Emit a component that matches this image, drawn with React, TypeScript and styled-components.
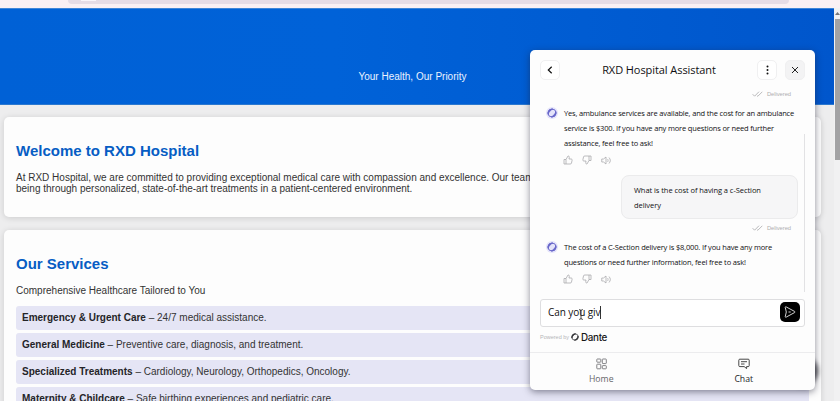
import React from "react";
import styled, { createGlobalStyle } from "styled-components";

const GlobalStyle = createGlobalStyle`
  * { box-sizing: border-box; }
  body {
    margin: 0;
    overflow: hidden;
    font-family: "Liberation Sans", Arial, sans-serif;
    font-size: 10px;
    color: #333;
    background: #ededee;
  }
  h1, h2, p, ul { margin: 0; padding: 0; }
  button { font: inherit; padding: 0; border: 0; background: none; }
`;

const Window = styled.div`
  position: relative;
  width: 840px;
  height: 401px;
  overflow: hidden;
  display: flex;
  flex-direction: column;
`;

const BrowserBar = styled.div`
  flex: none;
  height: 8px;
  padding: 0 51px 0 68px;
  background: #faf0f4;
`;

const AddressField = styled.div`
  height: 4px;
  border-radius: 0 0 8px 8px;
  padding-left: 13px;
  background: #e6dce6;
`;

const SiteChip = styled.div`
  width: 15px;
  height: 1px;
  background: #faf5fa;
`;

const Viewport = styled.div`
  flex: 1;
  min-height: 0;
  display: flex;
`;

const Page = styled.main`
  flex: none;
  width: 834px;
  overflow: hidden;
`;

const Banner = styled.header`
  height: 97px;
  padding-top: 62px;
  text-align: center;
  line-height: 11px;
  color: #eaf2ff;
  background: linear-gradient(90deg, #0061d6, #0062d8 40%, #0056cc);
  border-top: 1px solid #3f85d8;
  border-bottom: 1px solid #2b78cf;
  padding-right: 9px;
`;

const Card = styled.section<{ $height: number }>`
  width: 817px;
  height: ${(p) => p.$height}px;
  margin: 12px 0 13px 4px;
  padding: 25px 12px 0;
  border-radius: 5px;
  background: #fdfdfd;
  box-shadow: 0 1px 6px rgba(0, 0, 0, 0.14);
  & + & { margin-top: 13px; }
`;

const CardTitle = styled.h2`
  font-size: 15px;
  line-height: 17px;
  font-weight: 700;
  color: #075dc4;
`;

const CardText = styled.p`
  margin-top: 13px;
  line-height: 11px;
  white-space: nowrap;
`;

const ServiceList = styled.ul`
  margin-top: 10px;
  display: flex;
  flex-direction: column;
  gap: 3px;
  list-style: none;
`;

const Service = styled.li`
  height: 24px;
  padding: 0 6px;
  line-height: 24px;
  border-radius: 3px;
  background: #e5e5f5;
  strong { color: #242428; }
`;

const ScrollTrack = styled.div`
  width: 6px;
  padding-left: 1px;
  background: #f1f1f2;
`;

const ScrollArrow = styled.div`
  height: 11px;
  display: flex;
  align-items: center;
  justify-content: center;
`;

const ScrollThumb = styled.div`
  height: 141px;
  background: #a2a2a4;
`;

const ChatPanel = styled.aside`
  position: absolute;
  left: 530px;
  top: 50px;
  width: 285px;
  height: 340px;
  display: flex;
  flex-direction: column;
  border-radius: 5px;
  background: #fdfdfd;
  box-shadow: 0 2px 7px rgba(30, 30, 50, 0.5);
  font-family: "Open Sans", "Noto Sans", sans-serif;
  color: #101012;
`;

const Launcher = styled.div`
  position: absolute;
  left: 786px;
  top: 355px;
  width: 32px;
  height: 32px;
  border-radius: 50%;
  background: #505055;
  filter: blur(2px);
`;

const ChatHeader = styled.div`
  flex: none;
  height: 40px;
  padding: 0 10px;
  display: flex;
  align-items: center;
  gap: 8px;
`;

const ChatTitle = styled.h1`
  flex: 1;
  padding: 0 0 2px 1px;
  text-align: center;
  font-size: 11px;
  font-weight: 400;
  letter-spacing: -0.07px;
`;

const IconButton = styled.button<{ $filled?: boolean }>`
  width: 20px;
  height: 20px;
  display: flex;
  align-items: center;
  justify-content: center;
  border-radius: 5px;
  border: 1px solid #f0f0f1;
  background: ${(p) => (p.$filled ? "#f3f3f4" : "#fff")};
`;

const Messages = styled.div`
  flex: 1;
  min-height: 0;
  display: flex;
  justify-content: space-between;
  padding: 0 10px 0 16px;
`;

const Thread = styled.div`
  width: 252px;
  display: flex;
  flex-direction: column;
`;

const ThreadScroll = styled.div`
  width: 1px;
  height: 158px;
  margin-top: 44px;
  background: #e2e2e4;
`;

const Delivered = styled.div`
  height: 8px;
  margin-right: 7px;
  display: flex;
  align-items: center;
  justify-content: flex-end;
  gap: 4px;
  font-family: "Liberation Sans", Arial, sans-serif;
  font-size: 5.8px;
  letter-spacing: -0.05px;
  color: #aeaeb0;
`;

const BotMessage = styled.div`
  display: flex;
  gap: 6px;
  margin-top: 8px;
`;

const Avatar = styled.div`
  width: 12px;
  height: 12px;
  margin-top: 1px;
  flex: none;
  display: flex;
  align-items: center;
  justify-content: center;
  border-radius: 50%;
  background: #e4e3fa;
`;

const BotText = styled.p`
  font-size: 7.5px;
  letter-spacing: -0.16px;
  line-height: 15px;
  white-space: nowrap;
`;

const Feedback = styled.div`
  height: 10px;
  margin: 4px 0 0 17px;
  display: flex;
  align-items: center;
  gap: 9px;
`;

const UserBubble = styled.p`
  width: 177px;
  height: 44px;
  margin: 10px 0 5px;
  align-self: flex-end;
  padding: 7px 12px;
  border: 1px solid #ebebec;
  border-radius: 8px;
  background: #f6f6f7;
  font-size: 7.5px;
  letter-spacing: -0.06px;
  line-height: 15px;
  white-space: nowrap;
`;

const InputBox = styled.div`
  position: relative;
  flex: none;
  height: 28px;
  margin: 0 10px;
  padding: 0 4px 2px 7px;
  display: flex;
  align-items: center;
  justify-content: space-between;
  border: 1px solid #dedee0;
  border-radius: 3px;
  font-size: 10px;
  background: #fff;
`;

const Typed = styled.span`
  padding-right: 0;
  border-right: 1px solid #333;
  line-height: 13px;
  letter-spacing: -0.08px;
`;

const SendButton = styled.button`
  width: 20px;
  height: 20px;
  display: flex;
  align-items: center;
  justify-content: center;
  border-radius: 5px;
  background: #000;
`;

const Pointer = styled.svg`
  position: absolute;
  left: 37px;
  top: 9px;
`;

const Powered = styled.div`
  flex: none;
  height: 25px;
  padding: 0 10px 5px;
  display: flex;
  align-items: center;
  gap: 2px;
  font-family: "Liberation Sans", Arial, sans-serif;
  font-size: 5.5px;
  color: #b5b5b8;
`;

const Brand = styled.span`
  font-family: Inter, sans-serif;
  font-size: 9.8px;
  font-weight: 500;
  letter-spacing: -0.3px;
  color: #161618;
`;

const Tabs = styled.nav`
  flex: none;
  height: 38px;
  display: flex;
  border-top: 1px solid #ececee;
`;

const Tab = styled.div<{ $active?: boolean }>`
  flex: 1;
  padding-top: 5px;
  display: flex;
  flex-direction: column;
  align-items: center;
  gap: 2px;
  font-size: 8.7px;
  line-height: 14px;
  color: ${(p) => (p.$active ? "#1c1c1e" : "#66666a")};
`;

const Ring = ({ size, color }: { size: number; color: string }) => (
  <svg width={size} height={size} viewBox="0 0 10 10" fill="none" stroke={color}>
    <path d="M1.1 6.4C.3 3.4 2.7.8 5.8 1.1 4 1.8 1.8 3.7 1.1 6.4Z" fill={color} strokeWidth=".9" />
    <path d="M8.9 3.6C9.7 6.6 7.3 9.2 4.2 8.9 6 8.2 8.2 6.3 8.9 3.6Z" fill={color} strokeWidth=".9" />
    <circle cx="5" cy="5" r="4" strokeWidth=".9" />
  </svg>
);

const Thumb = ({ down }: { down?: boolean }) => (
  <svg width="10" height="10" viewBox="0 0 20 20" fill="none" stroke="#a6a6aa" strokeWidth="1.5" strokeLinejoin="round">
    <g transform={down ? "rotate(180 10 10)" : undefined}>
      <path d="M2 9h4v9H2zM6 9l4-7c2 0 3 1 2.500 3L12 8h4.500c1.500 0 2 1 1.700 2.500l-1.200 5.500c-.3 1.500-1 2-2.500 2H6" />
    </g>
  </svg>
);

const Speaker = () => (
  <svg width="10" height="9" viewBox="0 0 20 18" fill="none" stroke="#a6a6aa" strokeWidth="1.5" strokeLinejoin="round">
    <path d="M1.500 6v6H5l5 4V2L5 6zM13 6c1.500 2 1.500 4 0 6M16 3c3.500 4 3.500 8 0 12" />
  </svg>
);

const DeliveredMark = () => (
  <Delivered>
    <svg width="11" height="6" viewBox="0 0 11 6" fill="none" stroke="#a8a8ab" strokeWidth=".8">
      <path d="M.6 3.200 2.600 5.200 7 .7M5 4.600l.8.7L10.300.8" />
    </svg>
    Delivered
  </Delivered>
);

const FeedbackRow = () => (
  <Feedback>
    <Thumb />
    <Thumb down />
    <Speaker />
  </Feedback>
);

const services: [string, string][] = [
  ["Emergency & Urgent Care", "24/7 medical assistance."],
  ["General Medicine", "Preventive care, diagnosis, and treatment."],
  ["Specialized Treatments", "Cardiology, Neurology, Orthopedics, Oncology."],
  ["Maternity & Childcare", "Safe birthing experiences and pediatric care."],
];

const BotReply = ({ lines }: { lines: string[] }) => (
  <>
    <BotMessage>
      <Avatar>
        <Ring size={10} color="#6665c8" />
      </Avatar>
      <BotText>
        {lines.map((line) => (
          <React.Fragment key={line}>
            {line}
            <br />
          </React.Fragment>
        ))}
      </BotText>
    </BotMessage>
    <FeedbackRow />
  </>
);

export default function App() {
  return (
    <Window>
      <GlobalStyle />
      <BrowserBar>
        <AddressField>
          <SiteChip />
        </AddressField>
      </BrowserBar>
      <Viewport>
        <Page>
          <Banner>Your Health, Our Priority</Banner>
          <Card $height={100}>
            <CardTitle>Welcome to RXD Hospital</CardTitle>
            <CardText>
              At RXD Hospital, we are committed to providing exceptional medical care with compassion and excellence. Our team
              <br />
              being through personalized, state-of-the-art treatments in a patient-centered environment.
            </CardText>
          </Card>
          <Card $height={260}>
            <CardTitle>Our Services</CardTitle>
            <CardText>Comprehensive Healthcare Tailored to You</CardText>
            <ServiceList>
              {services.map(([name, detail]) => (
                <Service key={name}>
                  <strong>{name}</strong> – {detail}
                </Service>
              ))}
            </ServiceList>
          </Card>
        </Page>
        <ScrollTrack>
          <ScrollArrow>
            <svg width="5" height="3" viewBox="0 0 5 3">
              <path d="M0 3 2.500 0 5 3Z" fill="#77777a" />
            </svg>
          </ScrollArrow>
          <ScrollThumb />
        </ScrollTrack>
      </Viewport>
      <Launcher />
      <ChatPanel>
        <ChatHeader>
          <IconButton aria-label="Back">
            <svg width="6" height="8" viewBox="0 0 6 8" fill="none" stroke="#111" strokeWidth="1.2">
              <path d="M4.700.7 1.300 4l3.400 3.300" />
            </svg>
          </IconButton>
          <ChatTitle>RXD Hospital Assistant</ChatTitle>
          <IconButton aria-label="Menu">
            <svg width="3" height="10" viewBox="0 0 3 10" fill="#111">
              <circle cx="1.500" cy="1.500" r="1" />
              <circle cx="1.500" cy="5" r="1" />
              <circle cx="1.500" cy="8.500" r="1" />
            </svg>
          </IconButton>
          <IconButton $filled aria-label="Close">
            <svg width="8" height="8" viewBox="0 0 8 8" stroke="#222" strokeWidth="1">
              <path d="m1 1 6 6M7 1 1 7" />
            </svg>
          </IconButton>
        </ChatHeader>
        <Messages>
          <Thread>
            <DeliveredMark />
            <BotReply
              lines={[
                "Yes, ambulance services are available, and the cost for an ambulance",
                "service is $300. If you have any more questions or need further",
                "assistance, feel free to ask!",
              ]}
            />
            <UserBubble>
              What is the cost of having a c-Section
              <br />
              delivery
            </UserBubble>
            <DeliveredMark />
            <BotReply
              lines={[
                "The cost of a C-Section delivery is $8,000. If you have any more",
                "questions or need further information, feel free to ask!",
              ]}
            />
          </Thread>
          <ThreadScroll />
        </Messages>
        <InputBox>
          <Typed>Can you giv</Typed>
          <Pointer width="6" height="11" viewBox="0 0 6 11" fill="none" stroke="#222" strokeWidth=".8">
            <path d="M1 .6c1 0 2 .3 2 1.200 0-.9 1-1.200 2-1.200M3 1.500v8M1 10.400c1 0 2-.3 2-1.200 0 .9 1 1.200 2 1.200" />
          </Pointer>
          <SendButton aria-label="Send">
            <svg width="12" height="12" viewBox="0 0 12 12" fill="none" stroke="#e8e8e8" strokeWidth=".9" strokeLinejoin="round">
              <path d="M1.300 1.600C1 .9 1.500.6 2.200.9l8.300 4.500c.7.4.7.8 0 1.200l-8.300 4.500c-.7.3-1.200 0-.9-.7Q3.300 6 1.300 1.600ZM4.500 6h2.200" />
            </svg>
          </SendButton>
        </InputBox>
        <Powered>
          Powered by
          <Ring size={8} color="#333338" />
          <Brand>Dante</Brand>
        </Powered>
        <Tabs>
          <Tab>
            <svg width="11" height="12" viewBox="0 0 11 12" fill="none" stroke="#77777a" strokeWidth=".9">
              <rect x=".8" y="1" width="4" height="3.200" rx=".6" />
              <rect x="6.300" y="1" width="4" height="4.600" rx=".6" />
              <rect x=".8" y="6.200" width="4" height="4.600" rx=".6" />
              <rect x="6.300" y="7.600" width="4" height="3.200" rx=".6" />
            </svg>
            Home
          </Tab>
          <Tab $active>
            <svg width="12" height="12" viewBox="0 0 12 12" fill="none" stroke="#333" strokeWidth=".9" strokeLinejoin="round">
              <path d="M1.800 1.200h8.400q1 0 1 1v5.400q0 1-1 1H8.600v2L6.200 8.600H1.800q-1 0-1-1V2.200q0-1 1-1ZM3 3.700h6M3 6h3.500" />
            </svg>
            Chat
          </Tab>
        </Tabs>
      </ChatPanel>
    </Window>
  );
}
